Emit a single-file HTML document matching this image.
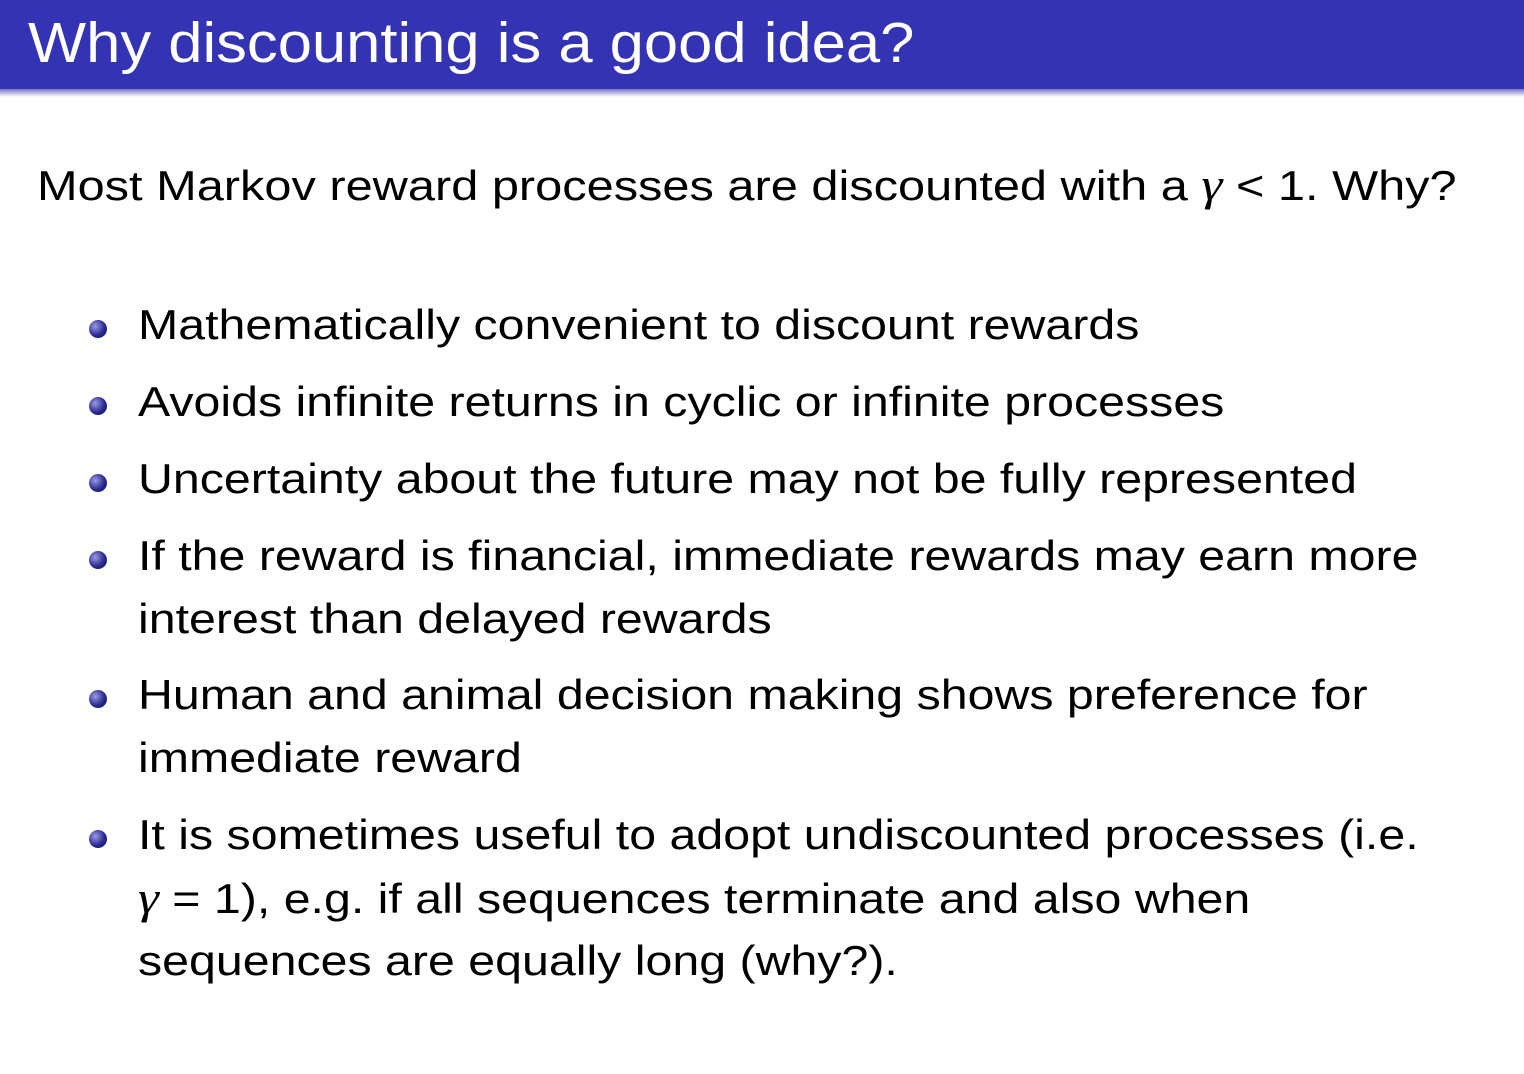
<!DOCTYPE html>
<html><head><meta charset="utf-8"><style>
body{margin:0;width:1524px;height:1074px;background:#fff;position:relative;overflow:hidden;font-family:"Liberation Sans","DejaVu Sans",sans-serif;color:#000}
.hdr{position:absolute;left:0;top:0;width:1524px;height:89px;background:#3333b3}
.sh{position:absolute;left:0;top:89px;width:1524px;height:8px;background:linear-gradient(#7777c8,#fff)}
.t{position:absolute;left:28px;top:8px;color:#fff;font-size:57px;line-height:70px;white-space:nowrap;transform:scaleX(1.08);transform-origin:0 0}
.l{position:absolute;font-size:42px;line-height:50px;white-space:nowrap;transform:scaleX(1.15);transform-origin:0 0}
.b{position:absolute;left:89px;width:18px;height:18px;border-radius:50%;background:radial-gradient(circle at 35% 35%,#9a9ae6,#2a2a90 55%,#101050)}
i{font-family:"Liberation Serif",serif;font-size:46px}
</style></head><body>
<div class="hdr"></div><div class="sh"></div>
<div class="t">Why discounting is a good idea?</div>
<div class="l" style="left:37px;top:160px;transform:scaleX(1.16)">Most Markov reward processes are discounted with a <i>γ</i> &lt; 1. Why?</div>
<div class="b" style="top:320px"></div><div class="l" style="left:138px;top:300px">Mathematically convenient to discount rewards</div>
<div class="b" style="top:397px"></div><div class="l" style="left:138px;top:377px">Avoids infinite returns in cyclic or infinite processes</div>
<div class="b" style="top:474px"></div><div class="l" style="left:138px;top:454px">Uncertainty about the future may not be fully represented</div>
<div class="b" style="top:551px"></div><div class="l" style="left:138px;top:531px">If the reward is financial, immediate rewards may earn more</div>
<div class="l" style="left:138px;top:594px">interest than delayed rewards</div>
<div class="b" style="top:690px"></div><div class="l" style="left:138px;top:670px">Human and animal decision making shows preference for</div>
<div class="l" style="left:138px;top:733px">immediate reward</div>
<div class="b" style="top:830px"></div><div class="l" style="left:138px;top:810px">It is sometimes useful to adopt undiscounted processes (i.e.</div>
<div class="l" style="left:138px;top:873px"><i>γ</i> = 1), e.g. if all sequences terminate and also when</div>
<div class="l" style="left:138px;top:936px">sequences are equally long (why?).</div>
</body></html>
